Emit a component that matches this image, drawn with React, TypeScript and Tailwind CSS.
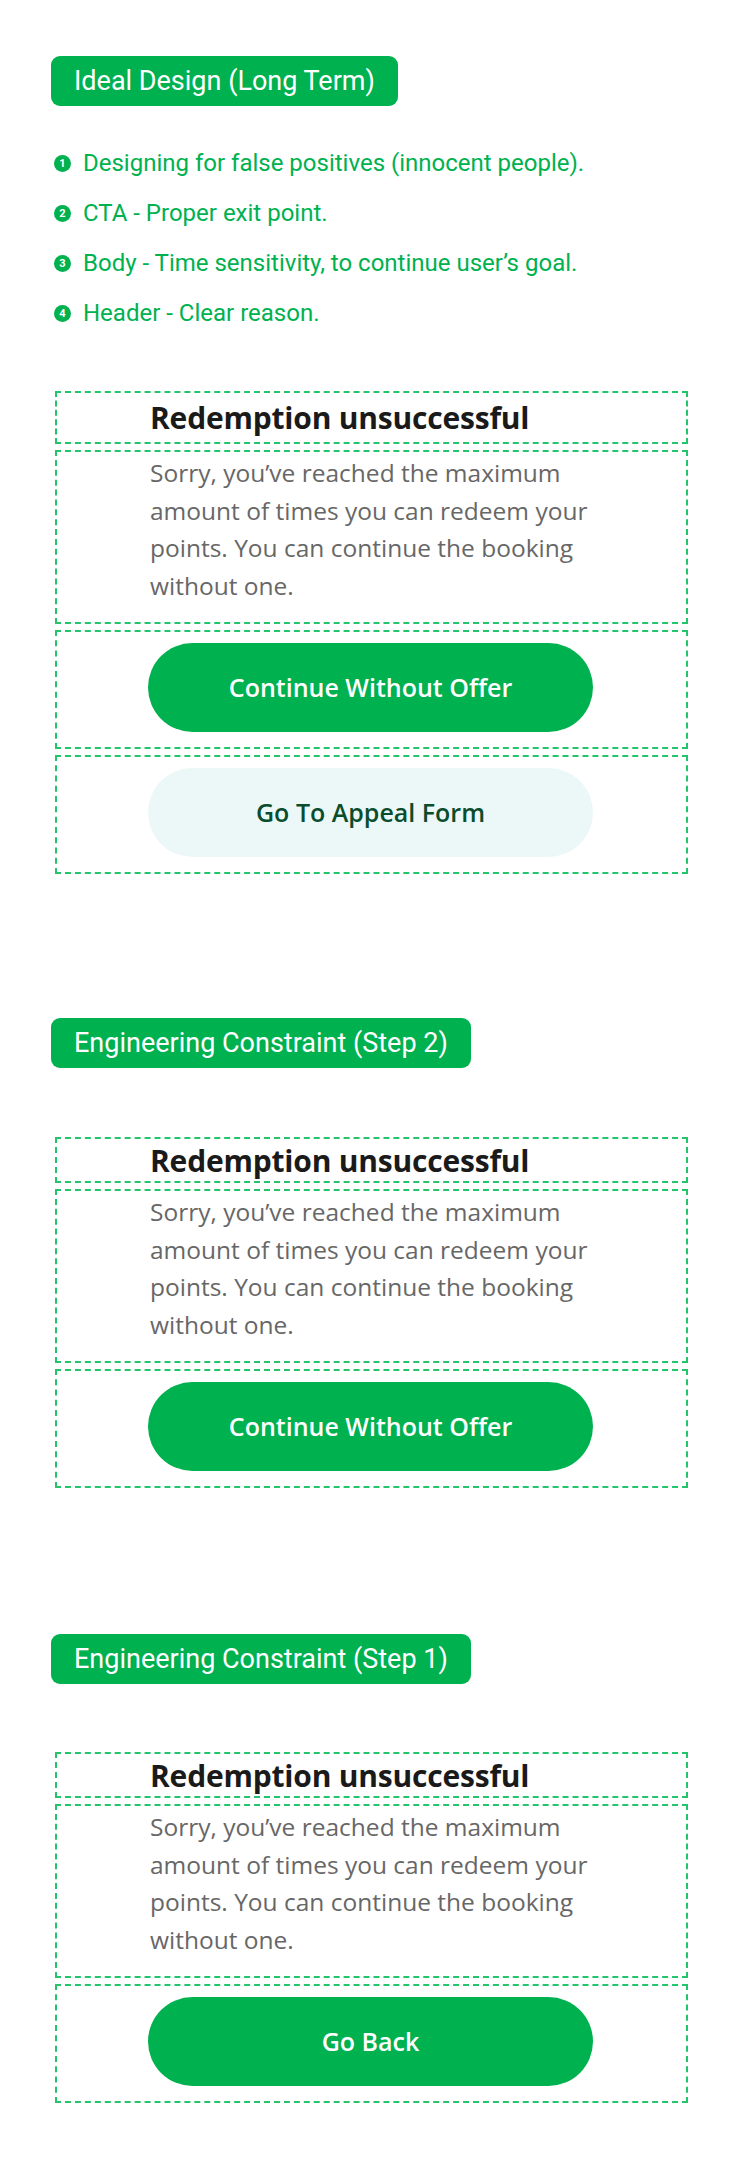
import React from 'react'

const green = 'bg-[#00b14f]'

function Tag({ label }: { label: string }) {
  return (
    <div className={`inline-flex h-[50px] items-center rounded-[9px] ${green} px-[23px] font-['Roboto',sans-serif] text-[27px] text-white`}>
      {label}
    </div>
  )
}

// dashed outline used around each block of the sheet
const slot = 'border-2 border-dashed border-[#22c56b]'

function Sheet({ headerH, buttons }: { headerH: string; buttons: { label: string; light?: boolean }[] }) {
  return (
    <div className="ml-[4px] flex w-[633px] flex-col gap-[6px] font-['Open_Sans',sans-serif]">
      <div className={`${slot} flex ${headerH} items-center pl-[93px]`}>
        <h2 className="text-[30px] font-bold tracking-[-0.2px] text-[#1a1a1a]">Redemption unsuccessful</h2>
      </div>
      <div className={`${slot} h-[174px] pl-[93px] pt-[2px]`}>
        <p className="w-[460px] text-[24.5px] leading-[37.5px] text-[#676767]">
          Sorry, you’ve reached the maximum amount of times you can redeem your points. You can continue the booking
          without one.
        </p>
      </div>
      {buttons.map((b) => (
        <div key={b.label} className={`${slot} h-[119px] pl-[91px] pt-[11px]`}>
          <button
            className={`flex h-[89px] w-[445px] items-center justify-center rounded-full text-[25px] font-semibold ${
              b.light ? 'bg-[#ebf8f7] text-[#0a4d2e]' : `${green} text-white`
            }`}
          >
            {b.label}
          </button>
        </div>
      ))}
    </div>
  )
}

const notes = [
  'Designing for false positives (innocent people).',
  'CTA - Proper exit point.',
  'Body - Time sensitivity, to continue user’s goal.',
  'Header - Clear reason.',
]

export default function App() {
  return (
    <div className="min-h-[2181px] w-[750px] bg-white pb-[78px] pl-[51px] pt-[56px]">
      <Tag label="Ideal Design (Long Term)" />

      <ul className="mt-[32px] font-['Roboto',sans-serif] text-[24px] text-[#00b14f]">
        {notes.map((n, i) => (
          <li key={n} className="flex h-[50px] items-center">
            <span className="ml-[3px] mr-[12px] flex h-[17px] w-[17px] items-center justify-center rounded-full bg-[#00b14f] text-[11px] font-bold leading-none text-white">
              {i + 1}
            </span>
            {n}
          </li>
        ))}
      </ul>

      <div className="mt-[53px]">
        <Sheet
          headerH="h-[53px]"
          buttons={[{ label: 'Continue Without Offer' }, { label: 'Go To Appeal Form', light: true }]}
        />
      </div>

      <div className="mt-[144px]">
        <Tag label="Engineering Constraint (Step 2)" />
      </div>
      <div className="mt-[69px]">
        <Sheet headerH="h-[46px]" buttons={[{ label: 'Continue Without Offer' }]} />
      </div>

      <div className="mt-[146px]">
        <Tag label="Engineering Constraint (Step 1)" />
      </div>
      <div className="mt-[68px]">
        <Sheet headerH="h-[46px]" buttons={[{ label: 'Go Back' }]} />
      </div>
    </div>
  )
}
